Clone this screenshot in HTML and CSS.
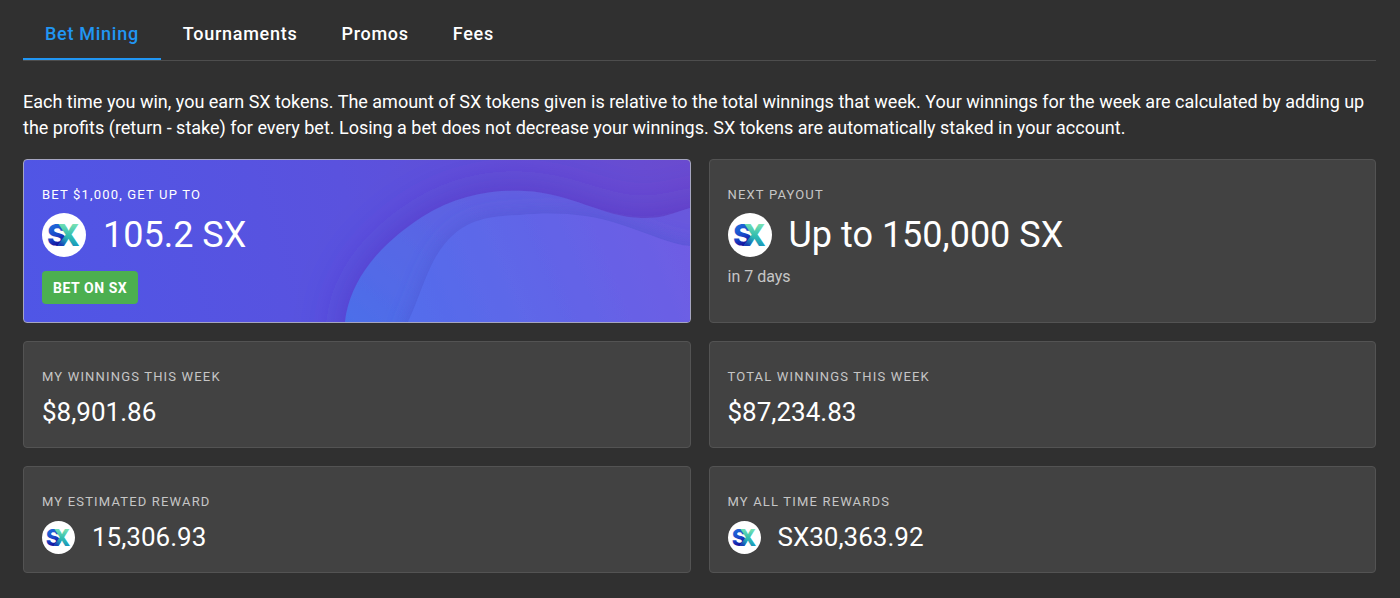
FILE: index.html
```
<!DOCTYPE html>
<html lang="en">
<head>
  <meta charset="UTF-8">
  <meta name="viewport" content="width=device-width, initial-scale=1.0">
  <title>Bet Mining</title>
  <link rel="stylesheet" href="styles.css">
</head>
<body>
  <!-- shared SX logo -->
  <svg class="defs" width="0" height="0" aria-hidden="true">
    <defs>
      <linearGradient id="sFill" x1="0" y1="0" x2="0.3" y2="1">
        <stop offset="0.2" stop-color="#1e70dd"/>
        <stop offset="0.6" stop-color="#1a48c8"/>
        <stop offset="0.85" stop-color="#1414a0"/>
      </linearGradient>
      <linearGradient id="xFill" gradientUnits="userSpaceOnUse" x1="27" y1="10" x2="24" y2="34">
        <stop offset="0" stop-color="#7be3b4"/>
        <stop offset="0.5" stop-color="#35bfae"/>
        <stop offset="1" stop-color="#1193c0"/>
      </linearGradient>
      <linearGradient id="xShade" gradientUnits="userSpaceOnUse" x1="17" y1="33" x2="25" y2="24">
        <stop offset="0.2" stop-color="#1a3fb4"/>
        <stop offset="1" stop-color="#1a7fc0" stop-opacity="0"/>
      </linearGradient>
      <symbol id="sxLogo" viewBox="0 0 44 44">
        <circle cx="22" cy="22" r="22" fill="#fff"/>
        <text class="logo-letter" x="5" y="33" fill="url(#sFill)">S</text>
        <text class="logo-letter" x="15" y="33" fill="url(#xFill)">X</text>
        <text class="logo-letter" x="15" y="33" fill="url(#xShade)">X</text>
      </symbol>
    </defs>
  </svg>

  <main class="page">
    <nav class="tabs" role="tablist">
      <button class="tab active" role="tab" aria-selected="true">Bet Mining</button>
      <button class="tab" role="tab" aria-selected="false">Tournaments</button>
      <button class="tab" role="tab" aria-selected="false">Promos</button>
      <button class="tab" role="tab" aria-selected="false">Fees</button>
    </nav>

    <p class="intro">Each time you win, you earn SX tokens. The amount of SX tokens given is relative to the total winnings that week. Your winnings for the week are calculated by adding up the profits (return - stake) for every bet. Losing a bet does not decrease your winnings. SX tokens are automatically staked in your account.</p>

    <div class="cards">
      <section class="card promo">
        <svg class="wave" viewBox="0 0 360 162" preserveAspectRatio="xMaxYMax slice" aria-hidden="true">
          <defs>
            <linearGradient id="waveBack" x1="0" y1="0.8" x2="1" y2="0.2">
              <stop offset="0" stop-color="#4a70ea"/>
              <stop offset="0.45" stop-color="#5b64e4"/>
              <stop offset="1" stop-color="#6a57dc"/>
            </linearGradient>
            <linearGradient id="waveFront" x1="0" y1="0.6" x2="1" y2="0.4">
              <stop offset="0" stop-color="#526eec"/>
              <stop offset="1" stop-color="#715be3"/>
            </linearGradient>
            <filter id="waveShadow" x="-30%" y="-60%" width="160%" height="220%">
              <feDropShadow dx="0" dy="0" stdDeviation="22" flood-color="#4a2ab8" flood-opacity="0.5"/>
            </filter>
            <filter id="waveShadowFront" x="-20%" y="-40%" width="140%" height="180%">
              <feDropShadow dx="0" dy="0" stdDeviation="10" flood-color="#4a50cc" flood-opacity="0.55"/>
            </filter>
            <clipPath id="waveClip">
              <path d="M15 162C20 118 52 83 92 57C125 36 160 29 194 31C242 33 272 57 311 58C332 59 343 53 360 48V200H15Z"/>
            </clipPath>
          </defs>
          <path d="M15 162C20 118 52 83 92 57C125 36 160 29 194 31C242 33 272 57 311 58C332 59 343 53 360 48L400 40V220H15Z" fill="url(#waveBack)" filter="url(#waveShadow)"/>
          <g clip-path="url(#waveClip)">
            <path d="M78 162C93 130 98 102 118 80C137 60 157 56 190 55C222 52 257 53 292 65C320 74 342 85 360 86L400 90V220H60Z" fill="url(#waveFront)" filter="url(#waveShadowFront)"/>
          </g>
        </svg>
        <h2 class="label">Bet $1,000, get up to</h2>
        <div class="value large">
          <svg class="logo" aria-hidden="true"><use href="#sxLogo"/></svg>
          <span>105.2 SX</span>
        </div>
        <button class="bet">Bet on SX</button>
      </section>

      <section class="card">
        <h2 class="label">Next payout</h2>
        <div class="value large">
          <svg class="logo" aria-hidden="true"><use href="#sxLogo"/></svg>
          <span>Up to 150,000 SX</span>
        </div>
        <p class="note">in 7 days</p>
      </section>

      <section class="card">
        <h2 class="label">My winnings this week</h2>
        <div class="value"><span>$8,901.86</span></div>
      </section>

      <section class="card">
        <h2 class="label">Total winnings this week</h2>
        <div class="value"><span>$87,234.83</span></div>
      </section>

      <section class="card">
        <h2 class="label">My estimated reward</h2>
        <div class="value">
          <svg class="logo" aria-hidden="true"><use href="#sxLogo"/></svg>
          <span>15,306.93</span>
        </div>
      </section>

      <section class="card">
        <h2 class="label">My all time rewards</h2>
        <div class="value">
          <svg class="logo" aria-hidden="true"><use href="#sxLogo"/></svg>
          <span>SX30,363.92</span>
        </div>
      </section>
    </div>
  </main>
</body>
</html>
```

FILE: styles.css
```
* {
  box-sizing: border-box;
}

body {
  margin: 0;
  background: #303030;
  color: #fff;
  font-family: Roboto, "Liberation Sans", sans-serif;
  font-size: 18px;
}

.defs {
  position: absolute;
}

.page {
  padding: 0 24px 24px 23px;
}

.tabs {
  display: flex;
  border-bottom: 1px solid #4d4d4d;
}

.tab {
  height: 60px;
  padding: 8px 22px 0;
  border: none;
  border-bottom: 2px solid transparent;
  background: none;
  color: #fff;
  font: inherit;
  font-weight: 500;
  letter-spacing: 0.04em;
  cursor: pointer;
}

.tab.active {
  border-bottom-color: #2196f3;
  color: #2196f3;
}

.intro {
  margin: 28px 0 18px;
  line-height: 26px;
}

.cards {
  display: grid;
  grid-template-columns: 1fr 1fr;
  gap: 18px;
}

.card {
  position: relative;
  overflow: hidden;
  padding: 26px 18px 18px;
  border: 1px solid #535353;
  border-radius: 4px;
  background: #424242;
}

.promo {
  border-color: #a5a5c0;
  background: linear-gradient(75deg, #4f56e6, #5a52de 50%, #6a4bd0);
}

.promo > * {
  position: relative;
}

.promo .wave {
  position: absolute;
  right: 0;
  bottom: 0;
  width: 360px;
  height: 100%;
  overflow: visible;
}

.label {
  margin: 0 0 9px;
  color: #c6c6c6;
  font-size: 13px;
  font-weight: 400;
  line-height: 18px;
  letter-spacing: 0.09em;
  text-transform: uppercase;
}

.promo .label {
  color: #fff;
}

.value {
  display: flex;
  align-items: center;
  gap: 17px;
  height: 34px;
  font-size: 26px;
}

.value.large {
  height: 44px;
  font-size: 36px;
}

.logo {
  width: 33px;
  height: 33px;
}

.large .logo {
  width: 44px;
  height: 44px;
}

.logo-letter {
  font-family: Inter, Roboto, sans-serif;
  font-size: 30px;
  font-weight: 800;
}

.bet {
  display: block;
  height: 33px;
  margin-top: 14px;
  padding: 0 11px;
  border: none;
  border-radius: 4px;
  background: #4caf50;
  color: #fff;
  font: inherit;
  font-size: 14px;
  font-weight: 700;
  letter-spacing: 0.04em;
  text-transform: uppercase;
  cursor: pointer;
}

.note {
  margin: 10px 0 0;
  color: #c6c6c6;
  font-size: 16px;
  line-height: 20px;
}

@media (max-width: 720px) {
  .cards {
    grid-template-columns: 1fr;
  }

  .tabs {
    overflow-x: auto;
  }
}
```
